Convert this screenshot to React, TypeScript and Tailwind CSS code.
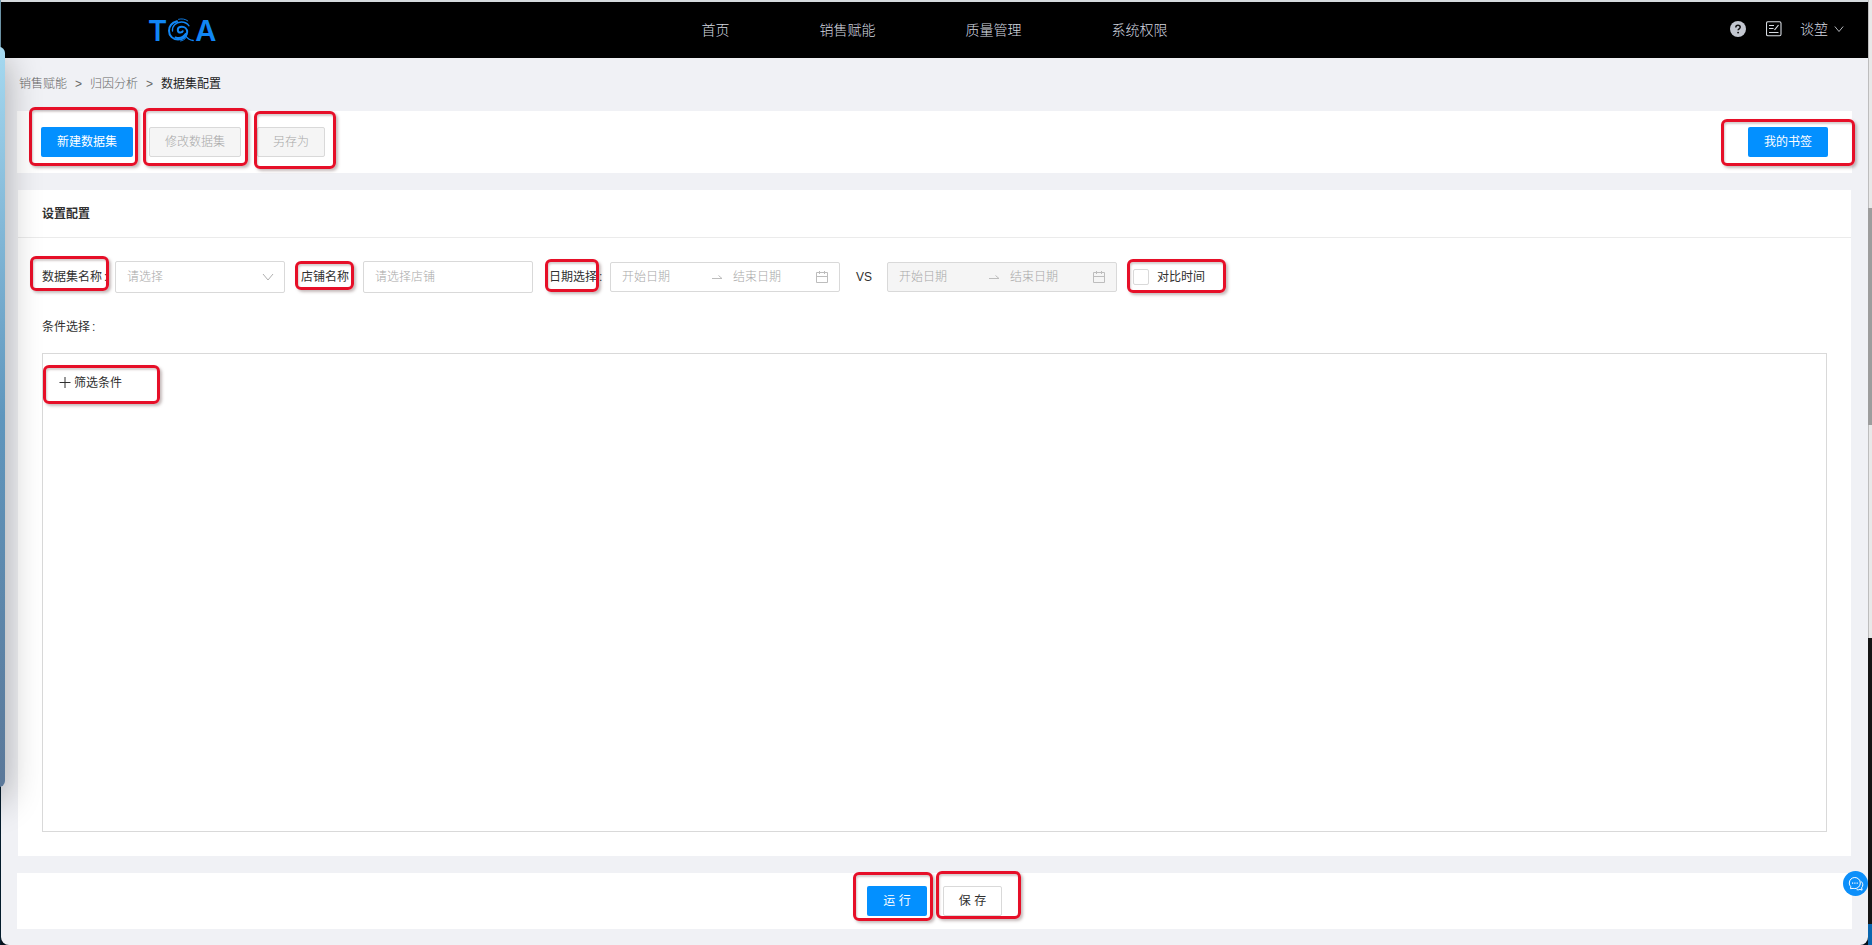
import React from "react";

function Mark({ className }: { className: string }) {
  return (
    <span
      aria-hidden="true"
      className={`pointer-events-none absolute rounded-md border-3 border-[#e60f28] shadow-[2px_2px_3px_rgba(90,60,60,0.35),inset_1px_2px_2px_rgba(90,60,60,0.25)] ${className}`}
    />
  );
}

function Logo() {
  return (
    <a
      href="#"
      className="flex items-center pl-[147px] font-[Inter,sans-serif] text-[29px] leading-none font-semibold text-[#1186f5]"
    >
      <span>T</span>
      <svg viewBox="0 0 28 24" className="h-6 w-7" fill="none" stroke="currentColor" strokeLinecap="round">
        <path d="M10 3.200C5 4.600 2 8.300 2 12.800c0 5.200 4 8.800 9 8.800 5.200 0 9.200-3.300 9.200-7.600 0-3.300-2.500-5.300-5.300-5.300-2.300 0-4.100 1.300-4.100 3.200 0 1.600 1.200 2.600 2.700 2.600 1.100 0 1.900-.5 2.200-1.300" strokeWidth="2" />
        <path d="M5.500 13c-.6-5 3.300-8.800 8.700-9 3.400-.1 6 1.200 7.800 3.800" strokeWidth="1.300" />
        <path d="M11.500 1.300c3.400-.9 6.700-.3 9.300 1.600" strokeWidth="0.900" />
        <path d="M8.500 19.500c4 1.300 8-.2 10.300-3.600" strokeWidth="2" />
        <path d="M13.500 23c2.400-.4 4.300-1.600 5.500-3.200" strokeWidth="0.900" />
        <path d="M18.500 17.500c1.600 2.700 3.900 4.500 7.700 5" strokeWidth="1.300" />
      </svg>
      <span>A</span>
    </a>
  );
}

function Chevron({ className }: { className: string }) {
  return (
    <svg viewBox="0 0 12 12" className={className} fill="none" stroke="currentColor">
      <path d="M1 3l5 6 5-6" />
    </svg>
  );
}

function RangePicker({ label, disabled }: { label: string; disabled?: boolean }) {
  const inputClass =
    "w-0 min-w-0 flex-1 bg-transparent font-light outline-none placeholder:text-[#a8a8a8]";
  return (
    <div
      className={`flex h-[30px] w-[230px] items-center rounded-xs border border-[#d9d9d9] px-[11px] text-[#bdbdbd] ${disabled ? "bg-[#f5f5f5]" : "bg-white"}`}
    >
      <input aria-label={`${label}开始日期`} placeholder="开始日期" disabled={disabled} className={inputClass} />
      <svg viewBox="0 0 12 12" className="mr-2.5 ml-1.5 size-3 shrink-0" fill="none" stroke="currentColor">
        <path d="M1 7.500h10L7.500 4.500" />
      </svg>
      <input aria-label={`${label}结束日期`} placeholder="结束日期" disabled={disabled} className={inputClass} />
      <svg viewBox="0 0 12 12" className="size-3 shrink-0" fill="none" stroke="currentColor">
        <path d="M.5 1.500h11v10H.5zM.5 5.500h11M3.500 0v3M8.500 0v3" />
      </svg>
    </div>
  );
}

const primaryButton = "h-[30px] rounded-xs bg-[#0390ff] text-white";
const disabledButton = "h-[30px] rounded-xs border border-[#d9d9d9] bg-[#f5f5f5] font-light text-[#a8a8a8]";
const navItems = ["首页", "销售赋能", "质量管理", "系统权限"];

export default function App() {
  return (
    <div className="relative flex min-h-screen overflow-hidden bg-[#06121c] font-['Liberation_Sans','Noto_Sans_CJK_SC',sans-serif] text-xs leading-[18px] text-[#303030]">
      <div className="w-px shrink-0 bg-linear-to-b from-[#6c93a6] from-5% to-[#041c2c] to-10%" />
      <div className="relative flex min-w-0 flex-1 flex-col rounded-b-lg border-t-2 border-[#d5dadd] bg-[#f0f1f5]">
        <header className="grid h-14 shrink-0 grid-cols-[1fr_auto_1fr] items-center bg-black text-sm text-[#d6dae0]">
          <Logo />
          <nav className="flex gap-[90px] font-light">
            {navItems.map((item) => (
              <a key={item} href="#">
                {item}
              </a>
            ))}
          </nav>
          <div className="flex items-center justify-end pr-6 pb-0.5 font-light">
            <button aria-label="帮助">
              <svg viewBox="0 0 16 16" className="size-4">
                <circle cx="8" cy="8" r="8" fill="#c3c7d0" />
                <path d="M5.800 6.500c0-1.400 1-2.200 2.200-2.200s2.200.8 2.200 2c0 1.500-2.100 1.500-2.100 3" fill="none" stroke="#111" strokeWidth="1.500" />
                <circle cx="8.100" cy="11.600" r="0.950" fill="#111" />
              </svg>
            </button>
            <button aria-label="记录" className="ml-5">
              <svg viewBox="0 0 16 16" className="size-4" fill="none" stroke="currentColor">
                <rect x="0.500" y="0.800" width="14.500" height="14" rx="1.500" strokeWidth="1.100" />
                <path d="M3 4.500h5M3 7.500h4.500M3 11.500h9.500M8.500 9l4-5" strokeWidth="1.200" />
              </svg>
            </button>
            <button className="ml-[18px] flex items-center gap-1.5">
              谈堃
              <Chevron className="size-2.5" />
            </button>
          </div>
        </header>

        <nav aria-label="位置" className="flex h-[53px] shrink-0 items-center gap-2 px-[18px] pb-0.5 font-light text-[#666]">
          <a href="#">销售赋能</a>
          <span>&gt;</span>
          <a href="#">归因分析</a>
          <span>&gt;</span>
          <span className="font-normal text-[#222]">数据集配置</span>
        </nav>

        <section className="mx-4 flex h-[62px] shrink-0 items-center gap-4 bg-white px-6">
          <div className="relative">
            <button className={`${primaryButton} w-[92px]`}>新建数据集</button>
            <Mark className="-top-5 -right-[5px] -bottom-[9px] -left-3" />
          </div>
          <div className="relative">
            <button disabled className={`${disabledButton} w-[92px]`}>修改数据集</button>
            <Mark className="-top-[19px] -right-[7px] -bottom-[9px] -left-1.5" />
          </div>
          <div className="relative">
            <button disabled className={`${disabledButton} w-[68px]`}>另存为</button>
            <Mark className="-top-4 -right-[11px] -bottom-3 -left-[3px]" />
          </div>
          <div className="relative z-10 ml-auto">
            <button className={`${primaryButton} w-20`}>我的书签</button>
            <Mark className="-top-2 -right-[27px] -bottom-[9px] -left-[27px]" />
          </div>
        </section>

        <section className="mx-[17px] mt-[17px] flex flex-1 flex-col bg-white">
          <h2 className="flex h-12 shrink-0 items-center border-b border-[#ebebeb] px-6 font-bold text-[#303030]">
            设置配置
          </h2>
          <div className="flex flex-1 flex-col px-6 pt-[23px] pb-6">
            <div className="flex flex-wrap items-center gap-4">
              <div className="flex items-center gap-2">
                <label htmlFor="dataset" className="relative flex h-8 w-[65px] items-center gap-0.5 whitespace-nowrap">
                  数据集名称<span>:</span>
                  <Mark className="-top-[5px] -right-0.5 bottom-0.5 -left-3" />
                </label>
                <div className="relative flex items-center">
                  <select
                    id="dataset"
                    defaultValue=""
                    className="h-8 w-[170px] appearance-none rounded-xs border border-[#d9d9d9] bg-white px-[11px] font-light text-[#a8a8a8]"
                  >
                    <option value="">请选择</option>
                  </select>
                  <Chevron className="pointer-events-none absolute right-[11px] size-3 text-[#b0b0b0]" />
                </div>
              </div>
              <div className="flex items-center gap-2">
                <label htmlFor="shop" className="relative flex h-8 w-[54px] items-center gap-0.5 whitespace-nowrap">
                  店铺名称<span>:</span>
                  <Mark className="top-0 right-px bottom-[3px] -left-1.5" />
                </label>
                <input
                  id="shop"
                  placeholder="请选择店铺"
                  className="h-8 w-[170px] rounded-xs border border-[#d9d9d9] px-[11px] font-light placeholder:text-[#a8a8a8]"
                />
              </div>
              <div className="flex items-center gap-2">
                <div className="relative flex h-8 w-[53px] items-center gap-0.5 whitespace-nowrap">
                  日期选择<span>:</span>
                  <Mark className="-top-0.5 right-[3px] bottom-px -left-1" />
                </div>
                <RangePicker label="日期选择" />
              </div>
              <span className="w-[15px]">VS</span>
              <RangePicker label="对比时间" disabled />
              <label className="relative flex h-8 items-center gap-2 whitespace-nowrap">
                <input
                  type="checkbox"
                  className="size-4 appearance-none rounded-xs border border-[#d9d9d9] bg-white checked:bg-[#0390ff]"
                />
                对比时间
                <Mark className="-top-0.5 -right-[21px] bottom-0 -left-1.5" />
              </label>
            </div>
            <p className="mt-[25px] flex gap-0.5">
              条件选择<span>:</span>
            </p>
            <div className="mt-[17px] min-h-40 flex-1 border border-[#d9d9d9] px-4 pt-5">
              <div className="relative w-fit">
                <button className="flex items-center gap-[3px]">
                  <svg viewBox="0 0 12 12" className="size-3" fill="none" stroke="currentColor">
                    <path d="M.5 5.500h11M6 0v11" />
                  </svg>
                  筛选条件
                </button>
                <Mark className="-top-[9px] -right-[38px] -bottom-3 -left-4" />
              </div>
            </div>
          </div>
        </section>

        <footer className="mx-4 mt-[17px] mb-4 flex h-14 shrink-0 items-center justify-center gap-4 bg-white">
          <div className="relative">
            <button className={`${primaryButton} w-[60px]`}>运 行</button>
            <Mark className="-top-3.5 -right-1.5 -bottom-[5px] -left-3.5" />
          </div>
          <div className="relative">
            <button className="h-[30px] w-[59px] rounded-xs border border-[#d9d9d9] bg-white">保 存</button>
            <Mark className="-top-[15px] -right-[19px] -bottom-[3px] -left-[7px]" />
          </div>
        </footer>

        <button
          aria-label="在线客服"
          className="absolute right-0 bottom-[49px] flex size-[25px] items-center justify-center rounded-full bg-[#0c8ffa] text-white"
        >
          <svg viewBox="0 0 16 16" className="size-4" fill="none" stroke="currentColor">
            <path d="M2.500 12.700l.3-2.100C1.800 9.600 1.300 8.400 1.300 7c0-3.200 2.500-5.500 5.500-5.500S12.300 3.800 12.300 7s-2.500 5.600-5.500 5.600c-.6 0-1.200-.1-1.700-.2z" />
            <path d="M12.800 5.200c1.300.9 2 2.100 2 3.600 0 1.200-.5 2.200-1.200 3l.5 2.300-2.200-.7c-1 .5-2.200.6-3.300.3" />
            <path d="M4 7.200h1.200M6.300 7.200h1.200M8.600 7.200h1.200" strokeWidth="1.300" />
          </svg>
        </button>
      </div>

      <div className="flex w-1 shrink-0 flex-col">
        <div className="basis-[22%] border-l border-[#bdbdbd] bg-[#e8e8e8]" />
        <div className="basis-[23%] bg-[#9d9d9d]" />
        <div className="basis-[22.500%] border-l border-[#bdbdbd] bg-[#e8e8e8]" />
        <div className="flex-1 bg-[#151515]" />
        <div className="basis-[2.200%] bg-[#0a66ae]" />
      </div>

      <div className="pointer-events-none absolute top-[5%] right-[calc(100%-5px)] bottom-[16.700%] w-60 rounded-r-md bg-linear-to-b from-[#a6d9f0] via-[#5f96bd] via-50% to-[#5b7899] shadow-[0_12px_36px_rgba(0,0,0,0.32)]" />
    </div>
  );
}
